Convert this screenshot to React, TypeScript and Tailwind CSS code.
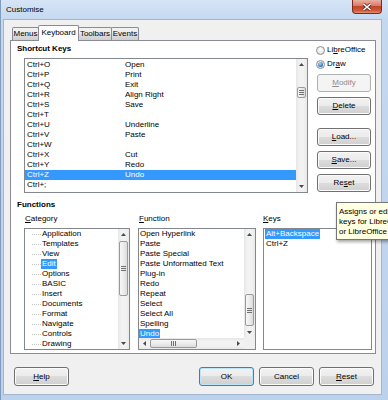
import React from "react";

function U({ children }: { children: React.ReactNode }) {
  return <span className="underline underline-offset-[1px]">{children}</span>;
}

function Arrow({ dir }: { dir: "up" | "down" | "left" | "right" }) {
  const vertical = dir === "up" || dir === "down";
  const w = vertical ? 5 : 3;
  const h = vertical ? 3 : 5;
  const pts =
    dir === "up"
      ? "0,3 2.5,0 5,3"
      : dir === "down"
      ? "0,0 2.5,3 5,0"
      : dir === "left"
      ? "3,0 0,2.5 3,5"
      : "0,0 3,2.5 0,5";
  return (
    <svg width={w} height={h} viewBox={`0 0 ${w} ${h}`}>
      <polygon points={pts} fill="#4a4a4a" />
    </svg>
  );
}

function GripV() {
  return (
    <svg width="5" height="5" viewBox="0 0 5 5">
      <rect x="0" y="0" width="5" height="1" fill="#6f6f6f" />
      <rect x="0" y="2" width="5" height="1" fill="#6f6f6f" />
      <rect x="0" y="4" width="5" height="1" fill="#6f6f6f" />
    </svg>
  );
}

function GripH() {
  return (
    <svg width="5" height="5" viewBox="0 0 5 5">
      <rect x="0" y="0" width="1" height="5" fill="#6f6f6f" />
      <rect x="2" y="0" width="1" height="5" fill="#6f6f6f" />
      <rect x="4" y="0" width="1" height="5" fill="#6f6f6f" />
    </svg>
  );
}

function VScroll({ thumb }: { thumb: string }) {
  return (
    <div className="flex w-[11px] shrink-0 flex-col bg-[linear-gradient(to_right,#e6e6e6,#f2f2f2_30%,#f2f2f2_70%,#e9e9e9)]">
      <div className="flex h-[11px] items-center justify-center">
        <Arrow dir="up" />
      </div>
      <div className="relative flex-1">
        <div
          className={`absolute inset-x-[1px] flex items-center justify-center rounded-[2px] border border-[#9a9a9a] bg-[linear-gradient(to_right,#f7f7f7,#ececec_50%,#dcdcdc)] ${thumb}`}
        >
          <GripV />
        </div>
      </div>
      <div className="flex h-[11px] items-center justify-center">
        <Arrow dir="down" />
      </div>
    </div>
  );
}

function HScroll() {
  return (
    <div className="flex h-[11px] flex-1 bg-[linear-gradient(to_bottom,#e6e6e6,#f2f2f2_30%,#f2f2f2_70%,#e9e9e9)]">
      <div className="flex w-[11px] items-center justify-center">
        <Arrow dir="left" />
      </div>
      <div className="relative flex-1">
        <div className="absolute inset-y-[1px] left-0 flex w-[47px] items-center justify-center rounded-[2px] border border-[#9a9a9a] bg-[linear-gradient(to_bottom,#f7f7f7,#ececec_50%,#dcdcdc)]">
          <GripH />
        </div>
      </div>
      <div className="flex w-[11px] items-center justify-center">
        <Arrow dir="right" />
      </div>
    </div>
  );
}

function Btn({
  children,
  className = "",
  variant = "normal",
}: {
  children: React.ReactNode;
  className?: string;
  variant?: "normal" | "disabled" | "default";
}) {
  const v =
    variant === "disabled"
      ? "border-[#adb2b5] bg-[#f4f4f4] text-[#8d8d8d]"
      : variant === "default"
      ? "border-[#3c7fb1] bg-[linear-gradient(to_bottom,#f2f2f2,#ebebeb_50%,#dddddd_50%,#cfcfcf)] shadow-[inset_0_0_0_1px_#bfe4f8]"
      : "border-[#707070] bg-[linear-gradient(to_bottom,#f2f2f2,#ebebeb_50%,#dddddd_50%,#cfcfcf)] shadow-[inset_0_0_0_1px_#fbfbfb]";
  return (
    <div className={`flex items-center justify-center rounded-[3px] border ${v} ${className}`}>
      {children}
    </div>
  );
}

function Radio({ checked, children }: { checked?: boolean; children: React.ReactNode }) {
  return (
    <div className="flex h-[10px] items-center gap-[2px]">
      <span className="flex h-[9px] w-[9px] items-center justify-center rounded-full border border-[#8e8f8f] bg-[radial-gradient(circle_at_50%_40%,#ffffff,#d8d8d8)]">
        {checked && (
          <span className="h-[5px] w-[5px] rounded-full bg-[radial-gradient(circle_at_40%_35%,#a8e0fb,#2b6cb8_70%,#1b4a8c)]" />
        )}
      </span>
      <span>{children}</span>
    </div>
  );
}

const tabBase =
  "flex items-center justify-center rounded-t-[2px] border border-b-0 border-[#898c95]";
const tabOff =
  "h-[13px] bg-[linear-gradient(to_bottom,#f2f2f2,#ebebeb_50%,#dddddd_50%,#cfcfcf)]";

export default function App() {
  const shortcuts: [string, string][] = [
    ["Ctrl+O", "Open"],
    ["Ctrl+P", "Print"],
    ["Ctrl+Q", "Exit"],
    ["Ctrl+R", "Align Right"],
    ["Ctrl+S", "Save"],
    ["Ctrl+T", ""],
    ["Ctrl+U", "Underline"],
    ["Ctrl+V", "Paste"],
    ["Ctrl+W", ""],
    ["Ctrl+X", "Cut"],
    ["Ctrl+Y", "Redo"],
    ["Ctrl+Z", "Undo"],
    ["Ctrl+;", ""],
    ["Ctrl+:", ""],
  ];
  const categories = [
    "Application",
    "Templates",
    "View",
    "Edit",
    "Options",
    "BASIC",
    "Insert",
    "Documents",
    "Format",
    "Navigate",
    "Controls",
    "Drawing",
  ];
  const functions = [
    "Open Hyperlink",
    "Paste",
    "Paste Special",
    "Paste Unformatted Text",
    "Plug-in",
    "Redo",
    "Repeat",
    "Select",
    "Select All",
    "Spelling",
    "Undo",
  ];

  return (
    <div className="relative h-[400px] w-[388px] overflow-hidden bg-[linear-gradient(to_bottom,#d6e5f6,#c4d8f0_20px,#bcd1ec)] font-['Liberation_Sans',Arial,sans-serif] text-[8px] leading-[10px] text-black shadow-[inset_1px_0_0_#7f9bbd]">
      {/* Title bar */}
      <div className="flex h-[20px]">
        <div className="pl-[6px] pt-[5px]">Customise</div>
        <div className="ml-auto mr-[6px] flex h-[14px] w-[30px] items-center justify-center rounded-b-[4px] border border-t-0 border-[#7a2b1e] bg-[linear-gradient(to_bottom,#eab0a2,#d87a64_45%,#c3462b_50%,#cf5638_80%,#e3906f)]">
          <svg width="10" height="8" viewBox="0 0 10 8">
            <path d="M1.5 1 L8.5 7 M8.5 1 L1.5 7" stroke="#5b2a22" strokeWidth="3" />
            <path d="M1.5 1 L8.5 7 M8.5 1 L1.5 7" stroke="#ffffff" strokeWidth="1.6" />
          </svg>
        </div>
      </div>

      {/* Client area */}
      <div className="ml-[4px] flex h-[374px] w-[377px] flex-col bg-[#f0f0f0] shadow-[0_0_0_1px_#a2b6cf]">
        {/* Tabs */}
        <div className="relative z-10 mt-[5px] flex h-[15px] items-end pl-[8px]">
          <div className={`${tabBase} ${tabOff} w-[27px]`}>Menus</div>
          <div className={`${tabBase} relative z-10 -mb-[1px] -ml-[1px] h-[16px] w-[41px] bg-white pb-[1px]`}>
            Keyboard
          </div>
          <div className={`${tabBase} ${tabOff} -ml-[1px] w-[34px]`}>Toolbars</div>
          <div className={`${tabBase} ${tabOff} -ml-[1px] w-[28px]`}>Events</div>
        </div>

        {/* Panel */}
        <div className="ml-[6px] h-[314px] w-[366px] border border-[#898c95] bg-white pl-[6px] pt-[3px]">
          {/* Shortcut keys */}
          <div className="flex">
            <div className="flex w-[291px] flex-col">
              <div className="h-[10px] font-bold">Shortcut Keys</div>
              <div className="ml-[7px] mt-[4px] flex h-[135px] w-[284px] border border-[#828790] bg-white">
                <div className="flex-1 overflow-hidden pt-[1px]">
                  {shortcuts.map(([k, f]) => {
                    const sel = k === "Ctrl+Z";
                    return (
                      <div
                        key={k}
                        className={`flex h-[10px] whitespace-nowrap pl-[2px] ${sel ? "bg-[#3399ff] text-white" : ""}`}
                      >
                        <span className="w-[98px]">{k}</span>
                        <span>{f}</span>
                      </div>
                    );
                  })}
                </div>
                <VScroll thumb="top-[17px] h-[11px]" />
              </div>
            </div>
            <div className="ml-[8px] flex flex-col">
              <div className="mt-[1px]">
                <Radio>
                  Li<U>b</U>reOffice
                </Radio>
              </div>
              <div className="mt-[4px]">
                <Radio checked>
                  Dr<U>a</U>w
                </Radio>
              </div>
              <Btn variant="disabled" className="ml-[1px] mt-[5px] h-[18px] w-[54px]">
                <span>
                  <U>M</U>odify
                </span>
              </Btn>
              <Btn className="ml-[1px] mt-[5px] h-[18px] w-[54px]">
                <span>
                  <U>D</U>elete
                </span>
              </Btn>
              <Btn className="ml-[1px] mt-[13px] h-[18px] w-[54px]">
                <span>
                  <U>L</U>oad...
                </span>
              </Btn>
              <Btn className="ml-[1px] mt-[5px] h-[18px] w-[54px]">
                <span>
                  <U>S</U>ave...
                </span>
              </Btn>
              <Btn className="ml-[1px] mt-[5px] h-[18px] w-[54px]">
                <span>
                  Re<U>s</U>et
                </span>
              </Btn>
            </div>
          </div>

          {/* Functions */}
          <div className="mt-[7px] h-[10px] font-bold">Functions</div>
          <div className="mt-[4px] flex">
            {/* Category */}
            <div className="ml-[7px] flex w-[106px] flex-col">
              <div className="h-[10px] pl-[1px]">
                <U>C</U>ategory
              </div>
              <div className="mt-[4px] flex h-[122px] border border-[#828790] bg-white">
                <div className="flex-1 overflow-hidden">
                  {categories.map((c) => (
                    <div key={c} className="flex h-[10px] items-center whitespace-nowrap pl-[7px]">
                      <span className="h-0 w-[9px] border-t border-dotted border-[#c4c4c4]" />
                      <span className={`px-[1px] ${c === "Edit" ? "bg-[#3399ff] text-white" : ""}`}>{c}</span>
                    </div>
                  ))}
                </div>
                <VScroll thumb="top-[1px] h-[55px]" />
              </div>
            </div>
            {/* Function */}
            <div className="ml-[8px] flex w-[118px] flex-col">
              <div className="h-[10px] pl-[1px]">
                <U>F</U>unction
              </div>
              <div className="mt-[4px] flex h-[122px] flex-col border border-[#828790] bg-white">
                <div className="flex flex-1 overflow-hidden">
                  <div className="flex-1 overflow-hidden">
                    {functions.map((f) => (
                      <div key={f} className="flex h-[10px] whitespace-nowrap">
                        <span className={`px-[1px] ${f === "Undo" ? "bg-[#3399ff] text-white" : ""}`}>{f}</span>
                      </div>
                    ))}
                  </div>
                  <VScroll thumb="top-[54px] h-[32px]" />
                </div>
                <div className="flex">
                  <HScroll />
                  <div className="h-[11px] w-[11px] bg-[#f0f0f0]" />
                </div>
              </div>
            </div>
            {/* Keys */}
            <div className="ml-[7px] flex w-[109px] flex-col">
              <div className="h-[10px]">
                <U>K</U>eys
              </div>
              <div className="mt-[4px] h-[122px] border border-[#828790] bg-white pl-[1px]">
                <div className="flex h-[10px]">
                  <span className="bg-[#3399ff] px-[1px] text-white">Alt+Backspace</span>
                </div>
                <div className="flex h-[10px]">
                  <span className="px-[1px]">Ctrl+Z</span>
                </div>
              </div>
            </div>
          </div>
        </div>

        {/* Bottom buttons */}
        <div className="mt-[13px] flex pl-[10px] pr-[7px]">
          <Btn className="h-[19px] w-[55px]">
            <span>
              <U>H</U>elp
            </span>
          </Btn>
          <Btn variant="default" className="ml-auto h-[19px] w-[55px]">
            OK
          </Btn>
          <Btn className="ml-[5px] h-[19px] w-[55px]">Cancel</Btn>
          <Btn className="ml-[5px] h-[19px] w-[55px]">
            <span>
              <U>R</U>eset
            </span>
          </Btn>
        </div>
      </div>

      {/* Tooltip */}
      <div className="absolute left-[336px] top-[202px] whitespace-nowrap border border-[#767676] bg-[#ffffe1] pb-[2px] pl-[2px] pr-[4px] pt-[4px] shadow-[1px_2px_3px_rgba(0,0,0,0.35)]">
        <div>Assigns or edits shortcut</div>
        <div>keys for LibreOffice commands,</div>
        <div>or LibreOffice Basic macros.</div>
      </div>
    </div>
  );
}
